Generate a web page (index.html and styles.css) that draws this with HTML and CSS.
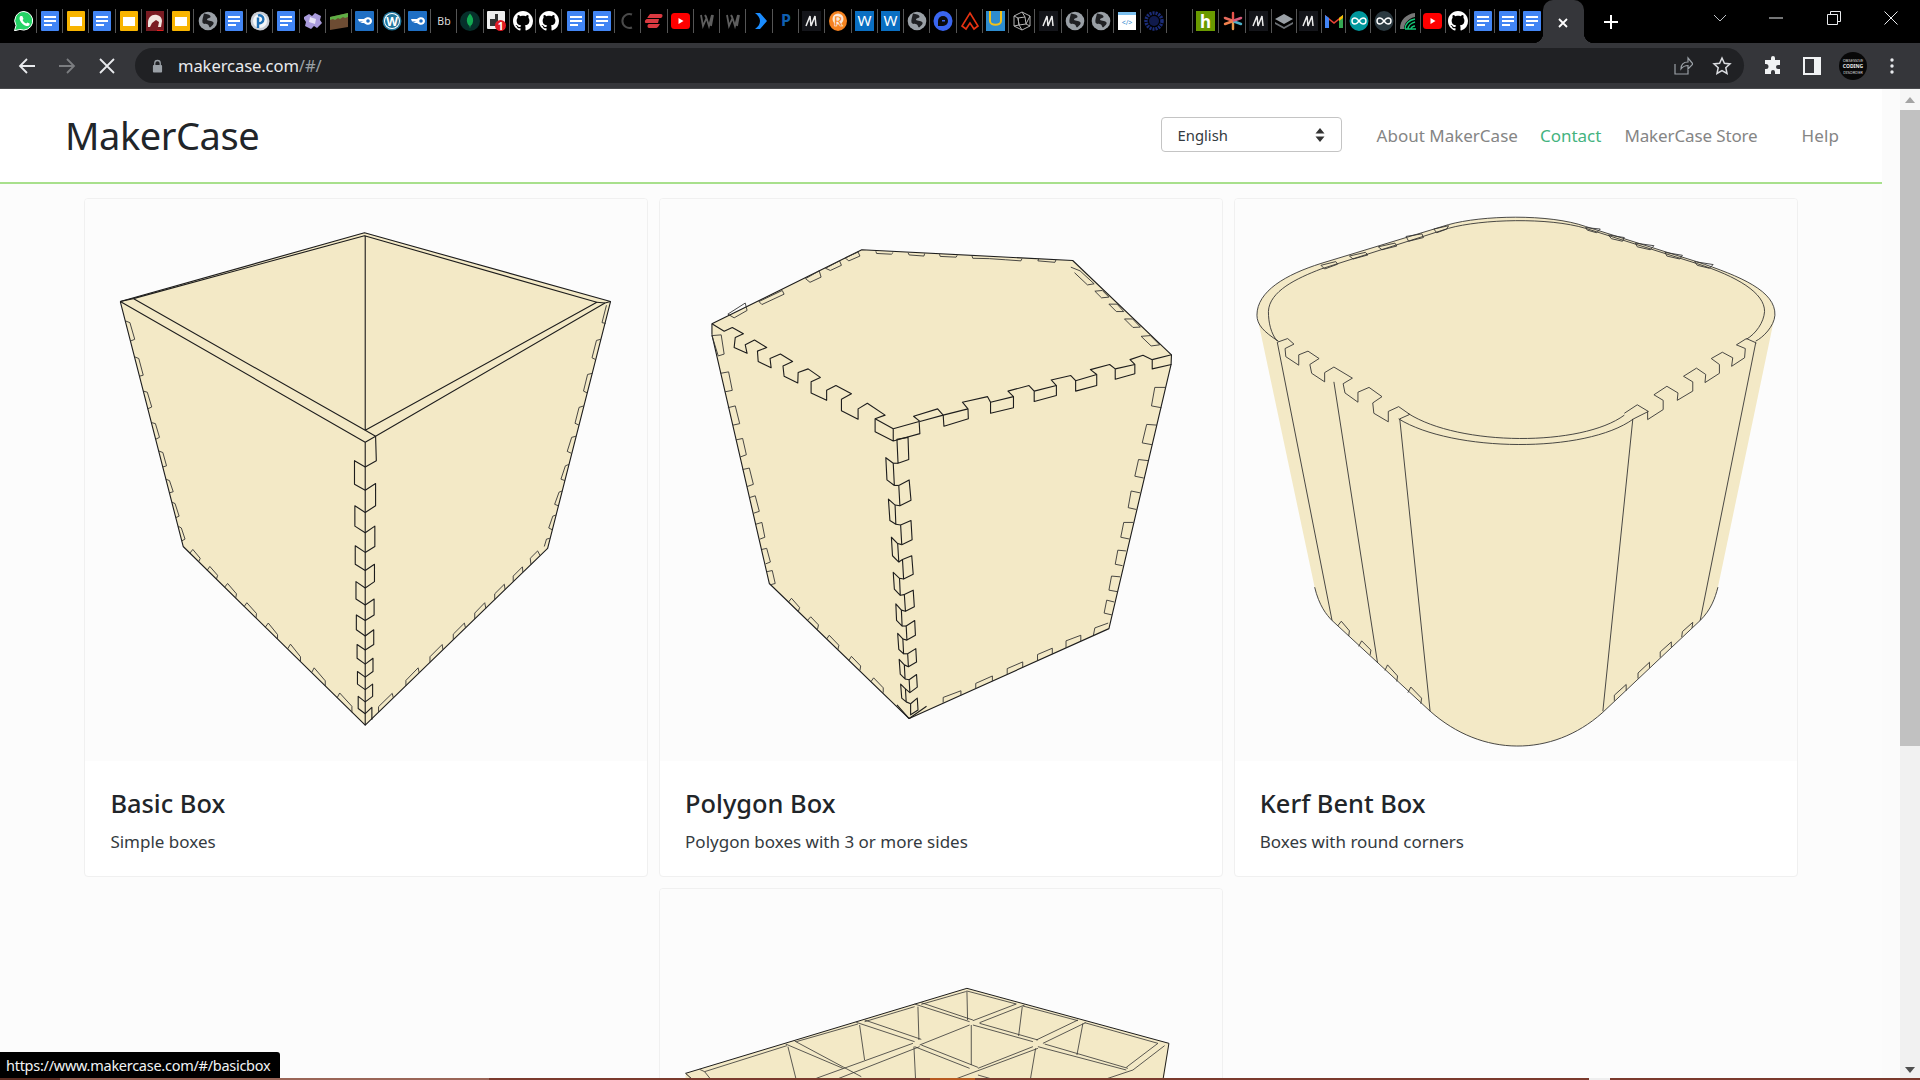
FILE: index.html
```html
<!DOCTYPE html>
<html lang="en">
<head>
<meta charset="utf-8">
<title>MakerCase</title>
<link rel="stylesheet" href="styles.css">
</head>
<body>
<svg class="sprites" aria-hidden="true">
  <symbol id="docs" viewBox="0 0 20 20"><rect x="1" width="18" height="20" rx="1" fill="#4285f4"/><path d="M4 5h12v2H4zM4 9h12v2H4zM4 13h8v2H4z" fill="#fff"/></symbol>
  <symbol id="slides" viewBox="0 0 20 20"><rect x="1" width="18" height="20" rx="1" fill="#f8b400"/><rect x="4" y="6" width="12" height="9" fill="#fff"/></symbol>
  <symbol id="whatsapp" viewBox="0 0 20 20"><path d="M10 .5a9.3 9.3 0 0 0-8 14L.5 19.8l5.4-1.4A9.3 9.3 0 1 0 10 .5z" fill="#25d366" stroke="#fff"/><path d="M6.5 5c-1 1-1.400 2.600-.3 4.800 1.200 2.400 3.500 4.500 6 5.200 1.600.4 2.800-.3 3.300-1.300.2-.5.2-1 .1-1.100l-2.300-1.200-1 1.200c-1.600-.6-3-2-3.700-3.600l.9-1.100L8.300 5z" fill="#fff"/></symbol>
  <symbol id="horse" viewBox="0 0 20 20"><rect x="1" width="18" height="20" fill="#7a1b22"/><path d="M3 12C3 6 7 3 12 4c3 .6 5 3 5 6l-1 6-3 0 1-5-3-2-4 3-2 4H3z" fill="#f2e6e0"/><path d="M12 19h6v1h-6z" fill="#e02020"/></symbol>
  <symbol id="globe" viewBox="0 0 20 20"><circle cx="10" cy="10" r="9.300" fill="#9aa0a6"/><path d="M6 2.500c3 .5 6 1 6.500 3 .3 1.600-3 1.500-3.500 3-.4 1.500 5 .8 6.500 3 .8 1.200-1.500 3.500-3.500 5-1-.6-1-2-2-3-1.500-1-5 0-5.500-2C3.800 9 5.500 5 6 2.500z" fill="#202124"/></symbol>
  <symbol id="pcircle" viewBox="0 0 20 20"><circle cx="10" cy="10" r="9.500" fill="#c9ced6"/><circle cx="10" cy="10" r="7" fill="#f4f6f8"/><path d="M8 17V6.500M8 4.500a4 4 0 1 1 0 7.500" fill="none" stroke="#1f6fb4" stroke-width="2.400"/></symbol>
  <symbol id="puzzle" viewBox="0 0 20 20"><path d="M1 6l5-3 3 2 3-3 6 3-1 4 2 3-5 5-3-2-3 3-6-3 1-4-2-3z" fill="#a99bdc"/><path d="M7 6l6 2-1 5-6-2z" fill="#e6e2f6"/></symbol>
  <symbol id="grass" viewBox="0 0 20 20"><path d="M1 6l18-4v14L1 19z" fill="#6d4c33"/><path d="M1 6l18-4v4l-3 1-2-1-3 2-2-1-3 2-2-1-3 1z" fill="#5fae45"/></symbol>
  <symbol id="fire" viewBox="0 0 20 20"><rect width="19" height="20" rx="1" fill="#1f6fc4"/><path d="M3 8h6c3-3 8-2 8 2s-5 5-8 2H5l3-1.500H4z" fill="#fff"/><circle cx="13" cy="10" r="1.800" fill="#1f6fc4"/></symbol>
  <symbol id="mongo" viewBox="0 0 20 20"><circle cx="10" cy="10" r="10" fill="#06302b"/><path d="M10 2.500c3 3.500 4 6.500 2.500 10-.7 1.500-1.700 2-2 2.500l-.5 2.500-.5-2.500c-.3-.5-1.300-1-2-2.500C6 9 7 6 10 2.500z" fill="#13aa52"/></symbol>
  <symbol id="github" viewBox="0 0 16 16"><path fill="#fff" d="M8 0C3.580 0 0 3.580 0 8c0 3.540 2.290 6.530 5.470 7.590.4.070.55-.17.55-.38 0-.19-.01-.82-.01-1.490-2.010.37-2.530-.49-2.690-.94-.09-.23-.48-.94-.82-1.130-.28-.15-.68-.52-.01-.53.63-.01 1.080.58 1.230.82.72 1.210 1.870.87 2.330.66.07-.52.28-.87.51-1.070-1.780-.2-3.640-.89-3.640-3.950 0-.87.31-1.590.82-2.150-.08-.2-.36-1.020.08-2.120 0 0 .67-.21 2.200.82.64-.18 1.320-.27 2-.27.68 0 1.360.09 2 .27 1.530-1.040 2.200-.82 2.200-.82.44 1.100.16 1.920.08 2.120.51.56.82 1.270.82 2.150 0 3.070-1.870 3.750-3.650 3.950.29.25.54.73.54 1.480 0 1.070-.01 1.930-.01 2.200 0 .21.15.46.55.38A8.013 8.013 0 0016 8c0-4.420-3.580-8-8-8z"/></symbol>
  <symbol id="cdim" viewBox="0 0 20 20"><path d="M14 3.500a7 7 0 1 0 0 13" fill="none" stroke="#4a4a4a" stroke-width="2"/></symbol>
  <symbol id="evpn" viewBox="0 0 20 20"><path d="M6 3h11c2 0 2 3 0 4H4c-1 0-1 0 2-4zM3 8h12l-1 4H2c-2 0-1-4 1-4zM5 13h11l-2 3c-1 1-2 1-3 1H5c-2 0-2-4 0-4z" fill="#da3940"/></symbol>
  <symbol id="yt" viewBox="0 0 20 20"><rect y="2" width="19" height="16" rx="3.500" fill="#f00"/><path d="M7.500 7v6l5-3z" fill="#fff"/></symbol>
  <symbol id="wgray" viewBox="0 0 20 20"><path d="M4 4l2 11 3.500-8L12 15 15 4M8 4l1.500 3M14 15l2-11" fill="none" stroke="#5e5e5e" stroke-width="1.800"/></symbol>
  <symbol id="chev" viewBox="0 0 20 20"><path d="M5 2h5l7 8-7 8H5c3-2 5-5 5-8S8 4 5 2z" fill="#1a8cff"/></symbol>
  <symbol id="medium" viewBox="0 0 20 20"><rect width="19" height="20" fill="#14151a"/><path d="M4 15L8 5l1 10 4-10 1 10" fill="none" stroke="#eee" stroke-width="1.500"/></symbol>
  <symbol id="bluedrop" viewBox="0 0 20 20"><ellipse cx="10" cy="10" rx="9.500" ry="10" fill="#3a66f0"/><path d="M5 10a5 5 0 1 1 5 5H5z" fill="#0b0b0b"/><path d="M9 9h3v1.500H9z" fill="#3a66f0"/></symbol>
  <symbol id="reda" viewBox="0 0 20 20"><path d="M10 2l8 13-4 3-4-6-4 6-4-3z" fill="none" stroke="#e63312" stroke-width="1.600"/></symbol>
  <symbol id="ublue" viewBox="0 0 20 20"><rect width="19" height="20" fill="#2d8ccf"/><path d="M4 0v10c0 5 11 5 11 0V0" fill="none" stroke="#f2c21a" stroke-width="2"/></symbol>
  <symbol id="cube" viewBox="0 0 20 20"><path d="M10 1l8 4v10l-8 4-8-4V5zM6 7l7-1 1 7-7 1zM2 5l4 2M10 1l3 5M18 5l-4 8M18 15l-4-2M10 19l-3-5M2 15l5-1M6 7l1 7" fill="none" stroke="#b5b5b5" stroke-width="1"/></symbol>
  <symbol id="gear" viewBox="0 0 20 20"><circle cx="10" cy="10" r="8" fill="none" stroke="#1b2c78" stroke-width="3.500" stroke-dasharray="2 1"/><circle cx="10" cy="10" r="5" fill="#101a4c"/></symbol>
  <symbol id="aster" viewBox="0 0 20 20"><g stroke-width="2.400" stroke-linecap="round"><path d="M10 2v7" stroke="#e8544c"/><path d="M10 11v7" stroke="#e89a4c"/><path d="M2 7l7 2.500" stroke="#e86b5c"/><path d="M11 10.500L18 13" stroke="#4cb0c8"/><path d="M2 13l7-2.500" stroke="#f0804c"/><path d="M11 9.500L18 7" stroke="#d85c7c"/></g></symbol>
  <symbol id="layers" viewBox="0 0 20 20"><path d="M10 3l9 5-9 5-9-5z" fill="#9aa0a6"/><path d="M1 11l9 5 9-5v2l-9 5-9-5z" fill="#6b6f74"/></symbol>
  <symbol id="gmail" viewBox="0 0 20 20"><path d="M1 4l9 7 9-7v13h-4V9l-5 4-5-4v8H1z" fill="#ea4335"/><path d="M1 4v13h4V7z" fill="#4285f4"/><path d="M19 4v13h-4V7z" fill="#34a853"/><path d="M15 7l4-3v3l-4 3z" fill="#fbbc04"/></symbol>
  <symbol id="ardu" viewBox="0 0 20 20"><ellipse cx="10" cy="10" rx="9.500" ry="10" fill="#00979c"/><path d="M10 10c-1.500-2-2.500-3-4-3a3 3 0 0 0 0 6c1.500 0 2.500-1 4-3s2.500-3 4-3a3 3 0 0 1 0 6c-1.500 0-2.500-1-4-3z" fill="none" stroke="#fff" stroke-width="1.400"/></symbol>
  <symbol id="ardud" viewBox="0 0 20 20"><ellipse cx="10" cy="10" rx="9.500" ry="10" fill="#2b3940"/><path d="M10 10c-1.500-2-2.500-3-4-3a3 3 0 0 0 0 6c1.500 0 2.500-1 4-3s2.500-3 4-3a3 3 0 0 1 0 6c-1.500 0-2.500-1-4-3z" fill="none" stroke="#fff" stroke-width="1.400"/></symbol>
  <symbol id="wifi" viewBox="0 0 20 20"><path d="M2 18C2 9 8 3 17 2v4c-6 1-11 6-11 12z" fill="#777"/><path d="M7 18c0-5 4-9 10-10M10 18c0-3 3-6 7-7M13 18c0-1.500 2-3 4-3" fill="none" stroke="#14c878" stroke-width="1.500"/><path d="M7 18h11" stroke="#14c878" stroke-width="1.500"/></symbol>
</svg>

<div class="window">
  <header class="tabstrip">
    <div class="tab"><svg class="fav"><use href="#whatsapp"/></svg></div>
    <div class="tab"><svg class="fav"><use href="#docs"/></svg></div>
    <div class="tab"><svg class="fav"><use href="#slides"/></svg></div>
    <div class="tab"><svg class="fav"><use href="#docs"/></svg></div>
    <div class="tab"><svg class="fav"><use href="#slides"/></svg></div>
    <div class="tab"><svg class="fav"><use href="#horse"/></svg></div>
    <div class="tab"><svg class="fav"><use href="#slides"/></svg></div>
    <div class="tab"><svg class="fav"><use href="#globe"/></svg></div>
    <div class="tab"><svg class="fav"><use href="#docs"/></svg></div>
    <div class="tab"><svg class="fav"><use href="#pcircle"/></svg></div>
    <div class="tab"><svg class="fav"><use href="#docs"/></svg></div>
    <div class="tab"><svg class="fav"><use href="#puzzle"/></svg></div>
    <div class="tab"><svg class="fav"><use href="#grass"/></svg></div>
    <div class="tab"><svg class="fav"><use href="#fire"/></svg></div>
    <div class="tab"><svg class="fav" viewBox="0 0 20 20"><circle cx="10" cy="10" r="9.500" fill="#21759b"/><circle cx="10" cy="10" r="8" fill="#fff"/><circle cx="10" cy="10" r="7" fill="#21759b"/><text x="10" y="14.500" text-anchor="middle" class="ft ft-b" font-size="12" fill="#fff">W</text></svg></div>
    <div class="tab"><svg class="fav"><use href="#fire"/></svg></div>
    <div class="tab"><svg class="fav" viewBox="0 0 20 20"><text x="10" y="14" text-anchor="middle" class="ft" font-size="10.500" fill="#ddd">Bb</text></svg></div>
    <div class="tab"><svg class="fav"><use href="#mongo"/></svg></div>
    <div class="tab"><svg class="fav" viewBox="0 0 20 20"><rect width="18" height="18" rx="1" fill="#eee"/><path d="M3 8h5V3h3v12H3z" fill="#333"/><circle cx="13.500" cy="14.500" r="5.500" fill="#e01b24"/><text x="13.500" y="18.500" text-anchor="middle" class="ft ft-b" font-size="10" fill="#fff">1</text></svg></div>
    <div class="tab"><svg class="fav"><use href="#github"/></svg></div>
    <div class="tab"><svg class="fav"><use href="#github"/></svg></div>
    <div class="tab"><svg class="fav"><use href="#docs"/></svg></div>
    <div class="tab"><svg class="fav"><use href="#docs"/></svg></div>
    <div class="tab"><svg class="fav"><use href="#cdim"/></svg></div>
    <div class="tab"><svg class="fav"><use href="#evpn"/></svg></div>
    <div class="tab"><svg class="fav"><use href="#yt"/></svg></div>
    <div class="tab"><svg class="fav"><use href="#wgray"/></svg></div>
    <div class="tab"><svg class="fav"><use href="#wgray"/></svg></div>
    <div class="tab"><svg class="fav"><use href="#chev"/></svg></div>
    <div class="tab"><svg class="fav" viewBox="0 0 20 20"><text x="10" y="15" text-anchor="middle" class="ft ft-b" font-size="16" fill="#0f5fb0">P</text></svg></div>
    <div class="tab"><svg class="fav"><use href="#medium"/></svg></div>
    <div class="tab"><svg class="fav" viewBox="0 0 20 20"><ellipse cx="10" cy="10" rx="9" ry="10" fill="#f58220"/><ellipse cx="10" cy="8" rx="5.500" ry="5.500" fill="#fbe6d2"/><text x="10" y="15" text-anchor="middle" class="ft ft-b" font-size="14" fill="#f58220" stroke="#fff" stroke-width=".5">R</text></svg></div>
    <div class="tab"><svg class="fav" viewBox="0 0 20 20"><rect width="19" height="20" fill="#0a6fc2"/><text x="9.500" y="15" text-anchor="middle" class="ft" font-size="15" fill="#fff">W</text></svg></div>
    <div class="tab"><svg class="fav" viewBox="0 0 20 20"><rect width="19" height="20" fill="#0a6fc2"/><text x="9.500" y="15" text-anchor="middle" class="ft" font-size="15" fill="#fff">W</text></svg></div>
    <div class="tab"><svg class="fav"><use href="#globe"/></svg></div>
    <div class="tab"><svg class="fav"><use href="#bluedrop"/></svg></div>
    <div class="tab"><svg class="fav"><use href="#reda"/></svg></div>
    <div class="tab"><svg class="fav"><use href="#ublue"/></svg></div>
    <div class="tab"><svg class="fav"><use href="#cube"/></svg></div>
    <div class="tab"><svg class="fav"><use href="#medium"/></svg></div>
    <div class="tab"><svg class="fav"><use href="#globe"/></svg></div>
    <div class="tab"><svg class="fav"><use href="#globe"/></svg></div>
    <div class="tab"><svg class="fav" viewBox="0 0 20 20"><rect x="1" y="1" width="18" height="18" fill="#fff"/><rect x="1" y="1" width="18" height="3" fill="#7cc0ef"/><text x="10" y="14" text-anchor="middle" class="ft" font-size="7" fill="#3f8fd2">&lt;/&gt;</text></svg></div>
    <div class="tab"><svg class="fav"><use href="#gear"/></svg></div>
    <div class="tab"></div>
    <div class="tab"><svg class="fav" viewBox="0 0 20 20"><rect width="19" height="20" fill="#6a9a00"/><text x="9.500" y="16.500" text-anchor="middle" class="ft ft-b" font-size="17" fill="#fff">h</text></svg></div>
    <div class="tab"><svg class="fav"><use href="#aster"/></svg></div>
    <div class="tab"><svg class="fav"><use href="#medium"/></svg></div>
    <div class="tab narrow"><svg class="fav"><use href="#layers"/></svg></div>
    <div class="tab narrow"><svg class="fav"><use href="#medium"/></svg></div>
    <div class="tab narrow"><svg class="fav"><use href="#gmail"/></svg></div>
    <div class="tab narrow"><svg class="fav"><use href="#ardu"/></svg></div>
    <div class="tab narrow"><svg class="fav"><use href="#ardud"/></svg></div>
    <div class="tab narrow"><svg class="fav"><use href="#wifi"/></svg></div>
    <div class="tab narrow"><svg class="fav"><use href="#yt"/></svg></div>
    <div class="tab narrow"><svg class="fav"><use href="#github"/></svg></div>
    <div class="tab narrow"><svg class="fav"><use href="#docs"/></svg></div>
    <div class="tab narrow"><svg class="fav"><use href="#docs"/></svg></div>
    <div class="tab narrow last"><svg class="fav"><use href="#docs"/></svg></div>
    <div class="tab-active"><svg class="ico12" viewBox="0 0 12 12"><path d="M2 2l8 8M10 2l-8 8" stroke="#fff" stroke-width="1.800"/></svg></div>
    <div class="newtab"><svg class="ico16" viewBox="0 0 16 16"><path d="M8 1v14M1 8h14" stroke="#fff" stroke-width="2"/></svg></div>
    <div class="winctl">
      <div class="winbtn chevron"><svg class="ico14" viewBox="0 0 14 14"><path d="M1 4l6 6 6-6" fill="none" stroke="#bdc1c6" stroke-width="1"/></svg></div>
      <div class="winbtn"><svg class="ico14" viewBox="0 0 14 14"><path d="M0 7h14" stroke="#e8eaed" stroke-width="1"/></svg></div>
      <div class="winbtn"><svg class="ico14" viewBox="0 0 14 14"><path d="M.5 3.500h10v10H.5zM3.500 3.500v-3h10v10h-3" fill="none" stroke="#e8eaed" stroke-width="1"/></svg></div>
      <div class="winbtn"><svg class="ico14" viewBox="0 0 14 14"><path d="M.5.500l13 13M13.500.500l-13 13" stroke="#e8eaed" stroke-width="1"/></svg></div>
    </div>
  </header>

  <nav class="toolbar">
    <div class="tool-nav">
      <svg class="ico18" viewBox="0 0 18 18"><path d="M17 9H2M9 2L2 9l7 7" fill="none" stroke="#e8eaed" stroke-width="1.800"/></svg>
      <svg class="ico18" viewBox="0 0 18 18"><path d="M1 9h15M9 2l7 7-7 7" fill="none" stroke="#7b7d80" stroke-width="1.800"/></svg>
      <svg class="ico18" viewBox="0 0 18 18"><path d="M2 2l14 14M16 2L2 16" fill="none" stroke="#e8eaed" stroke-width="1.800"/></svg>
    </div>
    <div class="omnibox">
      <svg class="lock" viewBox="0 0 12 14"><path d="M3 6V4a3 3 0 0 1 6 0v2" fill="none" stroke="#9aa0a6" stroke-width="1.400"/><rect x="1" y="6" width="10" height="8" rx="1" fill="#9aa0a6"/></svg>
      <span class="url">makercase.com<span class="url-path">/#/</span></span>
      <div class="omni-actions">
        <svg class="ico20" viewBox="0 0 20 20"><path d="M2 8v10h13v-4M8 13c0-5 3-7 7-7V2l5 6-5 5V9.500c-3 0-5 1-7 3.500z" fill="none" stroke="#9aa0a6" stroke-width="1.200"/></svg>
        <svg class="ico20" viewBox="0 0 20 20"><path d="M10 2l2.400 5.300 5.600.6-4.200 3.800 1.200 5.700-5-2.900-5 2.900 1.200-5.700L2 7.900l5.600-.6z" fill="none" stroke="#dadce0" stroke-width="1.500"/></svg>
      </div>
    </div>
    <div class="tool-right">
      <svg class="ico20" viewBox="0 0 20 20"><path d="M8 2a2 2 0 0 1 4 0v2h5v5h-2a2 2 0 0 0 0 4h2v5h-5v-2a2 2 0 0 0-4 0v2H2v-5h1a2.500 2.500 0 0 0 0-5H2V4h6z" fill="#f1f3f4"/></svg>
      <svg class="ico20" viewBox="0 0 20 20"><path d="M2 2h16v16H2z" fill="none" stroke="#f1f3f4" stroke-width="2"/><path d="M12 2h6v16h-6z" fill="#f1f3f4"/></svg>
      <svg class="avatar" viewBox="0 0 28 28"><circle cx="14" cy="14" r="14" fill="#080808"/><text x="14" y="9.500" text-anchor="middle" class="ft" font-size="4" fill="#ddd">OBSESSIVE</text><text x="14" y="16" text-anchor="middle" class="ft ft-b" font-size="5" fill="#e8e8e8">CODING</text><text x="14" y="22" text-anchor="middle" class="ft" font-size="4" fill="#ddd">DISORDER</text></svg>
      <svg class="dots" viewBox="0 0 4 16"><circle cx="2" cy="2" r="1.700" fill="#e8eaed"/><circle cx="2" cy="8" r="1.700" fill="#e8eaed"/><circle cx="2" cy="14" r="1.700" fill="#e8eaed"/></svg>
    </div>
  </nav>

  <div class="viewport">
    <main class="page">
      <div class="site-header">
        <a class="brand">MakerCase</a>
        <div class="lang"><span>English</span><svg class="lang-arrows" viewBox="0 0 10 14"><path d="M5 0l4.500 5.500h-9zM5 14L.5 8.500h9z" fill="#333"/></svg></div>
        <ul class="nav">
          <li class="nav-about">About MakerCase</li>
          <li class="nav-contact">Contact</li>
          <li class="nav-store">MakerCase Store</li>
          <li class="nav-help">Help</li>
        </ul>
      </div>

      <div class="grid">
        <article class="card">
          <div class="card-img">
            <svg class="art" viewBox="14.600 10.800 1519 1519">
              <polygon class="wood" points="110,288 770,102 1435,288 1265,955 772,1433 280,950"/>
              <g class="ln">
                <polyline points="110,288 770,102 1435,288 1265,955 772,1433 280,950 110,288"/>
                <polyline points="145,280 770,110 1398,290 772,636 145,280"/>
                <polyline points="110,288 772,668 800,652 1420,292 1435,288"/>
                <line x1="772" y1="110" x2="772" y2="636"/>
                <line x1="772" y1="636" x2="800" y2="652"/>
                <line x1="772" y1="668" x2="772" y2="1433"/>
                <line x1="145" y1="280" x2="110" y2="288"/>
                <line x1="1398" y1="290" x2="1420" y2="292"/>
                <polyline points="800,652 802,718 772,735 743,718 743,782 772,798 800,780 800,840 772,858 744,840 744,895 772,913 798,895 798,950 772,966 745,948 745,998 772,1015 797,998 797,1045 772,1062 747,1045 747,1092 772,1108 796,1092 796,1135 772,1150 748,1135 748,1175 772,1192 795,1175 795,1215 772,1230 750,1215 750,1252 772,1268 793,1252 793,1288 772,1303 751,1288 751,1322 772,1337 792,1322 792,1355 772,1370 753,1355 753,1388 772,1402 790,1385 790,1418"/>
              </g>
              <g class="ln thin">
                <polyline points="123,340 136,345 149,390 137,395"/>
                <polyline points="148,437 160,442 172,487 161,490"/>
                <polyline points="172,530 183,533 195,573 184,578"/>
                <polyline points="194,615 205,618 216,655 206,660"/>
                <polyline points="214,692 225,696 235,732 225,735"/>
                <polyline points="233,768 243,772 253,802 243,805"/>
                <polyline points="249,830 258,834 269,868 260,872"/>
                <polyline points="266,895 275,900 285,930 276,935"/>
                <polyline points="298,968 306,958 326,982 322,991"/>
                <polyline points="345,1014 352,1004 373,1028 370,1038"/>
                <polyline points="392,1060 400,1050 424,1078 422,1089"/>
                <polyline points="445,1112 452,1102 478,1131 477,1143"/>
                <polyline points="502,1168 510,1157 535,1188 535,1200"/>
                <polyline points="562,1227 570,1214 597,1248 597,1261"/>
                <polyline points="627,1291 634,1278 664,1313 664,1327"/>
                <polyline points="696,1359 703,1346 736,1382 736,1398"/>
                <polyline points="1424,298 1412,345 1422,347"/>
                <polyline points="1409,390 1397,393 1385,440 1395,445"/>
                <polyline points="1386,482 1373,485 1362,530 1372,535"/>
                <polyline points="1363,570 1350,574 1339,617 1350,622"/>
                <polyline points="1342,652 1330,655 1318,693 1329,698"/>
                <polyline points="1323,728 1313,732 1301,768 1312,772"/>
                <polyline points="1305,800 1296,803 1284,836 1294,840"/>
                <polyline points="1288,865 1279,868 1268,900 1278,905"/>
                <polyline points="1271,928 1262,930 1256,950"/>
                <polyline points="1245,975 1238,962 1218,982 1220,999"/>
                <polyline points="1198,1020 1197,1005 1172,1030 1172,1045"/>
                <polyline points="1150,1067 1148,1052 1122,1078 1122,1094"/>
                <polyline points="1098,1117 1095,1102 1068,1130 1068,1146"/>
                <polyline points="1043,1170 1040,1157 1010,1187 1010,1202"/>
                <polyline points="982,1229 980,1215 947,1248 947,1263"/>
                <polyline points="918,1292 915,1278 882,1312 882,1327"/>
                <polyline points="848,1359 845,1347 808,1383 808,1398"/>
              </g>
            </svg>
          </div>
          <div class="card-body"><h5>Basic Box</h5><p>Simple boxes</p></div>
        </article>

        <article class="card">
          <div class="card-img">
            <svg class="art" viewBox="14.600 10.800 1519 1519">
              <polygon class="wood" points="155,348 560,148 1130,177 1397,432 1396,458 1228,1172 688,1415 310,1050 155,378"/>
              <g class="ln">
                <polyline points="155,378 155,348 560,148 1130,177 1397,432 1396,458 1228,1172 688,1415 310,1050 155,378"/>
                <polyline points="155,348 188,368 210,358 240,375 218,385 215,412 250,428 245,405 270,392 303,412 278,422 280,450 315,467 312,442 340,430 373,450 347,462 350,490 387,508 388,480 415,470 448,493 423,505 423,535 465,555 465,528 490,515 532,537 505,552 505,583 550,606 550,578 575,563 623,595 596,605 596,640 645,665 645,632 715,612 717,645 645,665"/>
                <line x1="596" y1="605" x2="645" y2="632"/>
                <polyline points="717,612 700,598 765,578 780,595 717,612"/>
                <polyline points="780,595 782,625 848,605 847,578 832,560 900,545 908,560 908,590 970,575 970,545 955,530 1012,515 1026,530 1026,558 1086,542 1086,515 1072,500 1125,488 1138,502 1138,530 1195,515 1195,485 1178,472 1230,458 1245,470 1245,498 1298,483 1298,458 1285,445 1320,433 1345,445 1345,470 1397,458"/>
                <polyline points="780,595 847,578"/>
                <polyline points="908,560 970,545"/>
                <polyline points="1026,530 1086,515"/>
                <polyline points="1138,502 1195,485"/>
                <polyline points="1245,470 1298,458"/>
                <polyline points="1345,445 1397,432"/>
                <polygon points="655,660 685,655 687,715 658,725"/>
                <polygon points="625,710 628,770 648,785 645,725"/>
                <polygon points="660,785 688,770 693,825 663,840"/>
                <polygon points="632,822 636,880 652,890 650,838"/>
                <polygon points="665,892 693,880 696,932 668,945"/>
                <polygon points="640,925 643,975 660,992 657,942"/>
                <polygon points="670,985 695,975 699,1025 673,1038"/>
                <polygon points="645,1020 648,1065 664,1082 662,1036"/>
                <polygon points="675,1080 699,1068 702,1113 678,1125"/>
                <polygon points="652,1105 654,1150 669,1165 667,1122"/>
                <polygon points="680,1165 703,1150 705,1190 682,1203"/>
                <polygon points="657,1185 660,1228 673,1240 671,1200"/>
                <polygon points="684,1240 706,1226 708,1262 686,1275"/>
                <polygon points="661,1255 664,1295 677,1308 675,1270"/>
                <polygon points="688,1310 708,1296 710,1330 690,1345"/>
                <polygon points="665,1322 668,1360 680,1370 678,1335"/>
                <polygon points="692,1375 710,1360 712,1392 692,1405"/>
                <polyline points="655,1378 688,1415 735,1382"/>
                <polyline points="658,725 645,725"/>
                <polyline points="648,785 660,785"/>
                <polyline points="663,840 650,838"/>
                <polyline points="652,890 665,892"/>
                <polyline points="668,945 657,942"/>
                <polyline points="660,992 670,985"/>
                <polyline points="673,1038 662,1036"/>
                <polyline points="664,1082 675,1080"/>
                <polyline points="678,1125 667,1122"/>
                <polyline points="669,1165 680,1165"/>
                <polyline points="682,1203 671,1200"/>
                <polyline points="673,1240 684,1240"/>
                <polyline points="686,1275 675,1270"/>
                <polyline points="677,1308 688,1310"/>
                <polyline points="690,1345 678,1335"/>
                <polyline points="680,1370 692,1375"/>
              </g>
              <g class="ln thin">
                <polygon points="155,380 180,378 188,430 172,435"/>
                <polyline points="178,482 200,478 210,528 190,532"/>
                <polyline points="198,575 218,570 230,618 212,622"/>
                <polyline points="220,662 238,658 248,702 232,708"/>
                <polyline points="238,742 256,738 267,782 250,788"/>
                <polyline points="256,818 272,813 283,855 268,860"/>
                <polyline points="273,890 290,885 298,925 285,930"/>
                <polyline points="290,958 303,955 313,992 300,997"/>
                <polyline points="304,1018 318,1015 326,1050 315,1053"/>
                <polyline points="362,1100 370,1090 392,1115 388,1127"/>
                <polyline points="413,1150 422,1140 443,1162 440,1175"/>
                <polyline points="465,1200 472,1190 498,1217 495,1230"/>
                <polyline points="525,1258 532,1247 557,1273 555,1285"/>
                <polyline points="585,1315 592,1305 618,1332 618,1345"/>
                <polyline points="1382,520 1352,520 1343,570 1370,575"/>
                <polyline points="1358,622 1330,620 1318,670 1345,675"/>
                <polyline points="1334,718 1308,715 1298,760 1322,765"/>
                <polyline points="1312,805 1288,800 1280,845 1302,850"/>
                <polyline points="1294,885 1268,885 1260,925 1284,930"/>
                <polyline points="1274,962 1252,960 1245,998 1265,1002"/>
                <polyline points="1258,1032 1235,1030 1228,1068 1250,1072"/>
                <polyline points="1242,1100 1222,1095 1215,1130 1236,1135"/>
                <polyline points="1226,1157 1190,1170 1186,1190"/>
                <polyline points="1152,1206 1152,1190 1112,1205 1112,1224"/>
                <polyline points="1075,1241 1075,1225 1035,1242 1035,1259"/>
                <polyline points="995,1277 995,1262 953,1280 953,1296"/>
                <polyline points="913,1314 913,1300 868,1320 868,1335"/>
                <polyline points="828,1352 828,1340 780,1358 780,1372"/>
                <polyline points="598,152 600,158 640,160 645,155"/>
                <polyline points="685,156 688,162 728,165 730,158"/>
                <polyline points="770,160 772,166 815,168 818,163"/>
                <polyline points="858,165 860,171 905,172 948,175 990,178 993,172"/>
                <polyline points="1038,172 1036,178 1082,182 1085,175"/>
                <polygon points="550,154 555,165 525,178 515,170"/>
                <polygon points="500,178 505,190 475,204 462,198"/>
                <polygon points="445,205 450,222 420,236 408,226"/>
                <polygon points="345,258 350,268 290,296 282,288"/>
                <polygon points="245,292 250,312 215,332 198,322"/>
                <polyline points="1125,195 1150,205 1188,240 1170,243 1135,210"/>
                <polyline points="1190,260 1210,258 1228,276 1208,278 1190,260"/>
                <polyline points="1228,295 1250,295 1268,315 1248,315 1228,295"/>
                <polyline points="1270,335 1292,335 1313,357 1293,358 1270,335"/>
                <polyline points="1315,382 1340,380 1365,405 1342,408 1315,382"/>
              </g>
            </svg>
          </div>
          <div class="card-body"><h5>Polygon Box</h5><p>Polygon boxes with 3 or more sides</p></div>
        </article>

        <article class="card">
          <div class="card-img">
            <svg class="art" viewBox="12.700 10.800 1519 1519">
              <path class="wood" d="M72,325 C72,260 150,215 245,185 L590,80 C680,55 860,50 960,85 L1260,180 C1380,220 1475,260 1472,325 L1318,1060 C1310,1090 1300,1120 1270,1150 L1005,1400 C870,1520 680,1520 540,1395 L275,1150 C260,1135 240,1110 228,1060 Z"/>
              <g class="ln thin">
                <path d="M130,395 C90,370 72,350 72,325 C72,260 150,215 245,185 L590,80 C680,55 860,50 960,85 L1260,180 C1380,220 1475,260 1472,325 C1470,355 1440,385 1420,395"/>
                <path d="M127,395 C110,375 103,345 103,315 C105,260 180,225 245,200 L590,90 C680,65 860,60 960,90 L1260,185 C1370,220 1445,265 1444,315 C1442,345 1420,375 1395,390"/>
                <path d="M480,590 C620,680 950,680 1065,595"/>
                <path d="M455,605 C600,695 960,700 1090,605"/>
                <path d="M228,1060 C240,1110 260,1135 275,1150 L540,1395 C680,1520 870,1520 1005,1400 L1270,1150 C1300,1120 1310,1090 1318,1060"/>
                <line x1="127" y1="398" x2="275" y2="1150"/>
                <line x1="280" y1="505" x2="398" y2="1265"/>
                <line x1="458" y1="605" x2="540" y2="1395"/>
                <line x1="1088" y1="605" x2="1007" y2="1395"/>
                <line x1="1420" y1="400" x2="1270" y2="1150"/>
                <polyline points="127,398 155,388 172,403 148,415 150,437 185,460 185,432 210,422 240,442 215,458 220,482 255,505 255,480 280,465 330,495 305,510 310,535 345,560 345,533 375,520 410,545 385,562 388,590 427,613 427,585 455,572 485,593 458,605"/>
                <polyline points="1065,590 1100,567 1130,585 1090,605"/>
                <polyline points="1128,585 1128,607 1170,580 1170,555 1145,540 1180,517 1210,535 1208,555 1250,530 1250,505 1225,490 1260,468 1285,485 1283,507 1322,482 1322,458 1300,442 1330,425 1358,440 1355,463 1390,440 1392,415 1368,405 1395,388 1422,400"/>
                <polyline points="290,1165 300,1152 322,1178 320,1192"/>
                <polyline points="347,1220 355,1205 380,1230 378,1243"/>
                <polyline points="418,1285 425,1270 452,1300 450,1315"/>
                <polyline points="480,1345 488,1330 517,1360 515,1375"/>
                <polyline points="1248,1170 1250,1155 1222,1180 1220,1195"/>
                <polyline points="1192,1222 1192,1208 1162,1235 1162,1250"/>
                <polyline points="1133,1278 1133,1263 1102,1292 1102,1307"/>
                <polyline points="1070,1340 1070,1323 1038,1352 1038,1367"/>
                <polygon points="245,190 285,180 290,187 255,200"/>
                <polygon points="322,165 365,155 372,162 332,173"/>
                <polygon points="400,140 445,130 450,138 410,148"/>
                <polygon points="475,112 518,105 522,115 482,125"/>
                <polygon points="550,92 590,83 585,92 558,102"/>
                <polygon points="960,88 1000,92 990,102 965,95"/>
                <polygon points="1022,108 1065,115 1060,125 1030,118"/>
                <polygon points="1095,130 1145,137 1135,148 1100,140"/>
                <polygon points="1175,155 1222,163 1215,173 1180,165"/>
                <polygon points="1255,180 1305,188 1295,198 1262,190"/>
              </g>
            </svg>
          </div>
          <div class="card-body"><h5>Kerf Bent Box</h5><p>Boxes with round corners</p></div>
        </article>

        <article class="card card-center">
          <div class="card-img">
            <svg class="art" viewBox="-58.800 -273 1686 1686">
              <polygon class="wood" points="18,280 862,25 1468,190 1440,400 300,400 18,300"/>
              <g class="ln">
                <polyline points="18,280 862,25 1468,190 1445,330"/>
                <polyline points="18,280 40,300"/>
              </g>
              <g class="ln thin">
                <polyline points="60,268 75,275 322,197"/>
                <polyline points="350,185 535,132"/>
                <polyline points="555,125 705,80"/>
                <polyline points="725,73 858,35 862,33 1010,72"/>
                <polyline points="1030,78 1195,122"/>
                <polyline points="1215,128 1435,190 1340,262"/>
                <polyline points="318,192 490,265"/>
                <polyline points="345,183 545,290"/>
                <polyline points="530,127 705,185"/>
                <polyline points="555,120 725,178"/>
                <polyline points="705,200 870,265"/>
                <polyline points="725,195 895,262"/>
                <polyline points="895,285 940,298"/>
                <polyline points="705,72 870,125"/>
                <polyline points="725,68 880,120"/>
                <polyline points="880,135 1060,185"/>
                <polyline points="900,130 1075,180"/>
                <polyline points="1075,200 1340,270"/>
                <polyline points="1095,192 1345,265"/>
                <polyline points="1010,72 880,122"/>
                <polyline points="1035,75 900,128"/>
                <polyline points="870,135 720,195"/>
                <polyline points="700,190 410,295"/>
                <polyline points="720,200 440,310"/>
                <polyline points="1195,120 1070,180"/>
                <polyline points="1218,128 1090,190"/>
                <polyline points="1060,200 895,265"/>
                <polyline points="1075,205 820,300"/>
                <polyline points="1455,197 1360,270 1270,300"/>
                <line x1="862" y1="35" x2="864" y2="120"/>
                <line x1="715" y1="80" x2="718" y2="180"/>
                <line x1="540" y1="135" x2="555" y2="240"/>
                <line x1="325" y1="200" x2="350" y2="300"/>
                <line x1="875" y1="135" x2="875" y2="255"/>
                <line x1="1028" y1="80" x2="1017" y2="168"/>
                <line x1="1210" y1="130" x2="1192" y2="225"/>
                <line x1="703" y1="200" x2="708" y2="300"/>
                <line x1="1068" y1="205" x2="1052" y2="300"/>
                <line x1="75" y1="275" x2="95" y2="300"/>
              </g>
            </svg>
          </div>
        </article>
      </div>
    </main>
    <div class="gutter"></div>
    <aside class="scrollbar">
      <div class="sb-btn"><svg class="sb-arrow" viewBox="0 0 10 6"><path d="M5 0l5 6H0z" fill="#a3a3a3"/></svg></div>
      <div class="sb-thumb"></div>
      <div class="sb-track"></div>
      <div class="sb-btn sb-down"><svg class="sb-arrow" viewBox="0 0 10 6"><path d="M0 0h10L5 6z" fill="#505050"/></svg></div>
    </aside>
  </div>

  <div class="status">https://www.makercase.com/#/basicbox</div>
  <div class="taskbar">
    <i class="seg s-a"></i><i class="seg s-b"></i><i class="seg s-c"></i><i class="seg s-d"></i><i class="seg s-e"></i><i class="seg s-f"></i><i class="seg s-g"></i>
  </div>
</div>
</body>
</html>
```
FILE: styles.css
```css
* { box-sizing: border-box; }
html, body { margin: 0; padding: 0; height: 100%; overflow: hidden; }
body { font-family: "Noto Sans", "Open Sans", "Liberation Sans", sans-serif; background: #fcfcfc; color: #212529; }

.sprites { width: 0; height: 0; overflow: hidden; display: block; }
.ft { font-family: "Noto Sans", "Liberation Sans", sans-serif; }
.ft-b { font-weight: 700; }

.window { position: relative; width: 1920px; height: 1080px; display: flex; flex-direction: column; overflow: hidden; }

/* tab strip */
.tabstrip { height: 43px; background: #000; display: flex; padding-left: 10.500px; flex: none; }
.tab { width: 26.290px; height: 43px; flex: none; padding-top: 9px; background: linear-gradient(#555, #555) right 9px / 1px 24px no-repeat; }
.tab.narrow { width: 24.800px; }
.tab > .fav { display: block; width: 20px; height: 20px; margin: 2px auto 0; }
.tab.last { background: none; }
.tab-active { width: 41px; height: 43px; margin-left: -2px; flex: none; background: #35363a; border-radius: 10px 10px 0 0; display: flex; align-items: center; justify-content: center; position: relative; padding-top: 3px; }
.tab-active::before, .tab-active::after { content: ""; position: absolute; bottom: 0; width: 10px; height: 10px; }
.tab-active::before { left: -10px; background: radial-gradient(circle at 0 0, #000 10px, #35363a 10.500px); }
.tab-active::after { right: -10px; background: radial-gradient(circle at 100% 0, #000 10px, #35363a 10.500px); }
.ico12 { width: 12px; height: 12px; }
.ico14 { width: 14px; height: 14px; }
.ico16 { width: 16px; height: 16px; }
.ico18 { width: 18px; height: 18px; }
.ico20 { width: 20px; height: 20px; }
.newtab { width: 38px; margin-left: 8px; display: flex; align-items: center; justify-content: center; }
.winctl { margin-left: auto; display: flex; height: 36px; }
.winbtn { width: 57.500px; display: flex; align-items: center; justify-content: center; }
.winbtn.chevron { width: 40px; margin-right: 8px; }

/* toolbar */
.toolbar { height: 46px; flex: none; background: #35363a; display: flex; align-items: flex-start; border-bottom: 1px solid #4a4b4e; }
.tool-nav { width: 135px; height: 45px; flex: none; display: flex; align-items: center; gap: 22px; padding-left: 18px; padding-top: 1px; }
.omnibox { margin-top: 5px; width: 1609px; height: 35px; background: #202124; border-radius: 18px; display: flex; align-items: center; flex: none; padding-left: 17px; }
.lock { width: 11px; height: 14px; flex: none; }
.url { margin-left: 15px; font-size: 16.600px; color: #e8eaed; letter-spacing: -.1px; }
.url-path { color: #9aa0a6; }
.omni-actions { margin-left: auto; display: flex; gap: 19px; padding-right: 12px; align-items: center; }
.tool-right { flex: 1; height: 45px; display: flex; align-items: center; padding-left: 19px; padding-top: 1px; }
.tool-right .ico20:nth-child(2) { margin-left: 19px; }
.avatar { width: 28px; height: 28px; margin-left: 17px; }
.dots { width: 4px; height: 16px; margin-left: 23px; }

/* viewport */
.viewport { flex: 1; display: flex; min-height: 0; }
.page { width: 1882px; flex: none; overflow: hidden; }
.gutter { flex: 1; background: #fbfbfb; }
.scrollbar { width: 20px; flex: none; background: #f1f1f1; display: flex; flex-direction: column; }
.sb-btn { height: 21px; flex: none; display: flex; align-items: center; justify-content: center; background: #f6f6f6; }
.sb-down { background: #f1f1f1; }
.sb-arrow { width: 10px; height: 6px; }
.sb-thumb { height: 636px; flex: none; background: #c1c1c1; }
.sb-track { flex: 1; }

/* header */
.site-header { height: 95px; background: #fff; border-bottom: 2px solid #a8e08c; display: flex; align-items: center; padding-left: 65px; padding-right: 43px; }
.brand { font-size: 38px; line-height: 1; color: #212529; margin-top: -1px; letter-spacing: -.45px; }
.lang { margin-left: auto; width: 181px; height: 35px; border: 1px solid #c4c4c4; border-radius: 4px; display: flex; align-items: center; justify-content: space-between; padding: 0 16px; font-size: 14.800px; color: #343a40; margin-top: -2px; background: #fff; }
.lang-arrows { width: 10px; height: 14px; }
.nav { list-style: none; margin: 0 0 0 35px; padding: 0; display: flex; font-size: 17px; color: #858585; }
.nav-contact { color: #44b37f; margin-left: 22px; }
.nav-store { margin-left: 23px; letter-spacing: -.13px; }
.nav-help { margin-left: 44px; letter-spacing: .1px; }

/* cards */
.grid { display: grid; grid-template-columns: repeat(3, 564px); gap: 11px 10.700px; padding: 14px 0 0 84.400px; }
.card { background: #fff; border: 1px solid #f0f0f0; border-radius: 4px; overflow: hidden; }
.card-center { grid-column: 2; }
.card-img { height: 562px; background: #fcfcfc; }
.art { display: block; width: 562px; height: 562px; }
.wood { fill: #f3e9c6; stroke: none; }
.ln { fill: none; stroke: #1d1d1d; stroke-width: 3; stroke-linejoin: round; }
.ln.thin { stroke: #333; stroke-width: 2.400; }
.card-body { height: 115px; padding: 26px 25px 0; }
.card-body h5 { margin: 0; font-size: 25.400px; font-weight: 500; line-height: 32px; color: #212529; }
.card-body p { margin: 11px 0 0; font-size: 17px; line-height: 24px; color: #343a40; }

/* overlays */
.status { position: absolute; left: 0; bottom: 2px; height: 26px; width: 280px; background: #000; color: #f1f3f4; border-radius: 0 3px 0 0; font-size: 14.500px; line-height: 26px; padding-left: 6px; white-space: nowrap; letter-spacing: -.27px; }
.taskbar { position: absolute; left: 0; right: 0; bottom: 0; height: 2px; display: flex; }
.seg { display: block; height: 2px; flex: none; background: #7b3a2d; }
.s-a { width: 60px; background: #5c2c22; }
.s-b { width: 429px; background: #9a6557; }
.s-c { width: 441px; }
.s-d { width: 45px; background: #b85a20; }
.s-e { width: 614px; }
.s-f { width: 21px; background: #eeeeee; }
.s-g { width: 310px; }
```
